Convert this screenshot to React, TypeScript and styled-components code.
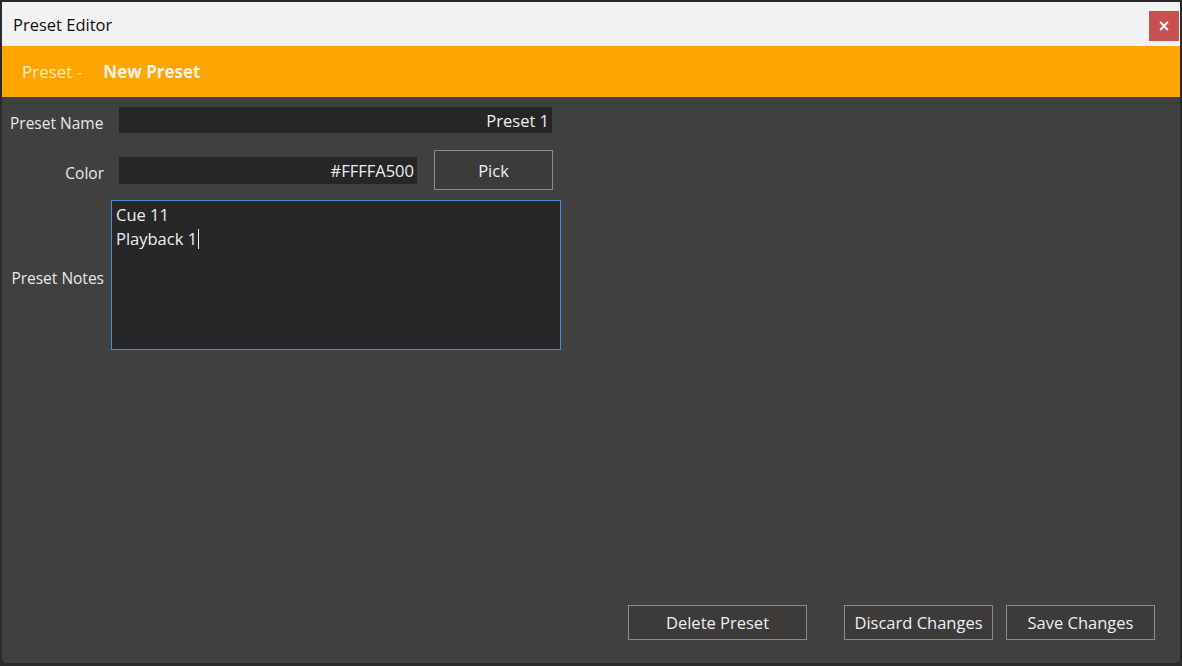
import React from 'react';
import styled, { createGlobalStyle } from 'styled-components';

const GlobalStyle = createGlobalStyle`
  html, body {
    margin: 0;
    padding: 0;
    background: #2a2a2a;
    font-family: "Open Sans", "Noto Sans", "Liberation Sans", sans-serif;
  }
  * { box-sizing: border-box; }
`;

const Window = styled.div`
  margin: 2px 2px 0 2px;
  width: 1178px;
  height: 661px;
  display: flex;
  flex-direction: column;
  background: #404040;
  border-radius: 0 0 4px 4px;
  overflow: hidden;
`;

const TitleBar = styled.div`
  height: 44px;
  background: #f2f2f2;
  display: flex;
  align-items: center;
  justify-content: space-between;
  padding: 0 1px 0 11px;
`;

const Title = styled.span`
  font-size: 16.5px;
  color: #111;
  margin-top: 1px;
`;

const CloseButton = styled.button`
  width: 30px;
  height: 30px;
  margin-top: 4px;
  border: none;
  background: #c75050;
  color: #fff;
  font-family: "DejaVu Sans", sans-serif;
  font-weight: bold;
  font-size: 15px;
  line-height: 30px;
  padding: 0;
  display: flex;
  align-items: center;
  justify-content: center;
`;

const Header = styled.div`
  height: 51px;
  background: #ffa500;
  display: flex;
  align-items: center;
  padding-left: 20px;
  font-size: 17px;
`;

const HeaderPrefix = styled.span`
  color: #f6e6c8;
  margin-right: 21px;
`;

const HeaderName = styled.span`
  color: #f7f1e8;
  font-weight: 700;
`;

const Body = styled.div`
  flex: 1;
  display: flex;
  flex-direction: column;
  padding: 10px 0 0 8px;
`;

const FieldRow = styled.div<{ $height: number; $top: number }>`
  display: flex;
  align-items: center;
  height: ${p => p.$height}px;
  margin-top: ${p => p.$top}px;
`;

const Label = styled.label<{ $align?: string }>`
  width: 94px;
  text-align: ${p => p.$align || 'right'};
  color: #e6e9ec;
  font-size: 15.5px;
  white-space: nowrap;
  padding-top: 6px;
`;

const TextInput = styled.div<{ $width: number; $height: number }>`
  width: ${p => p.$width}px;
  height: ${p => p.$height}px;
  margin-left: 15px;
  background: #262626;
  color: #eceff2;
  font-size: 16.5px;
  display: flex;
  align-items: center;
  justify-content: flex-end;
  padding-right: 3px;
`;

const OutlineButton = styled.button<{ $width: number; $height: number }>`
  width: ${p => p.$width}px;
  height: ${p => p.$height}px;
  background: #3d3b39;
  border: 1.5px solid #8c8c8c;
  color: #eceff2;
  font-family: inherit;
  font-size: 16.5px;
  padding: 0;
`;

const PickButton = styled(OutlineButton)`
  margin-left: 17px;
`;

const NotesRow = styled.div`
  display: flex;
  align-items: center;
  margin-top: 10px;
`;

const NotesArea = styled.div`
  width: 450px;
  height: 150px;
  margin-left: 7px;
  background: #272727;
  border: 1px solid #4a8fd8;
  color: #eceff2;
  font-size: 16.5px;
  line-height: 24px;
  padding: 2px 4px;
`;

const Caret = styled.span`
  display: inline-block;
  width: 1px;
  height: 20px;
  background: #f0f0f0;
  vertical-align: -4px;
  margin-left: 1px;
`;

const Footer = styled.div`
  margin-top: auto;
  display: flex;
  justify-content: flex-end;
  padding: 0 25px 23px 0;
  gap: 13px;
`;

const DeleteButton = styled(OutlineButton)`
  margin-right: 24px;
`;

export default function App() {
  return (
    <>
      <GlobalStyle />
      <Window>
        <TitleBar>
          <Title>Preset Editor</Title>
          <CloseButton>×</CloseButton>
        </TitleBar>
        <Header>
          <HeaderPrefix>Preset -</HeaderPrefix>
          <HeaderName>New Preset</HeaderName>
        </Header>
        <Body>
          <FieldRow $height={26} $top={0}>
            <Label $align="left">Preset Name</Label>
            <TextInput $width={433} $height={26}>Preset 1</TextInput>
          </FieldRow>
          <FieldRow $height={40} $top={17}>
            <Label>Color</Label>
            <TextInput $width={298} $height={27}>#FFFFA500</TextInput>
            <PickButton $width={119} $height={40}>Pick</PickButton>
          </FieldRow>
          <NotesRow>
            <Label>Preset Notes</Label>
            <NotesArea>
              Cue 11
              <br />
              Playback 1<Caret />
            </NotesArea>
          </NotesRow>
          <Footer>
            <DeleteButton $width={179} $height={35}>Delete Preset</DeleteButton>
            <OutlineButton $width={149} $height={35}>Discard Changes</OutlineButton>
            <OutlineButton $width={149} $height={35}>Save Changes</OutlineButton>
          </Footer>
        </Body>
      </Window>
    </>
  );
}
